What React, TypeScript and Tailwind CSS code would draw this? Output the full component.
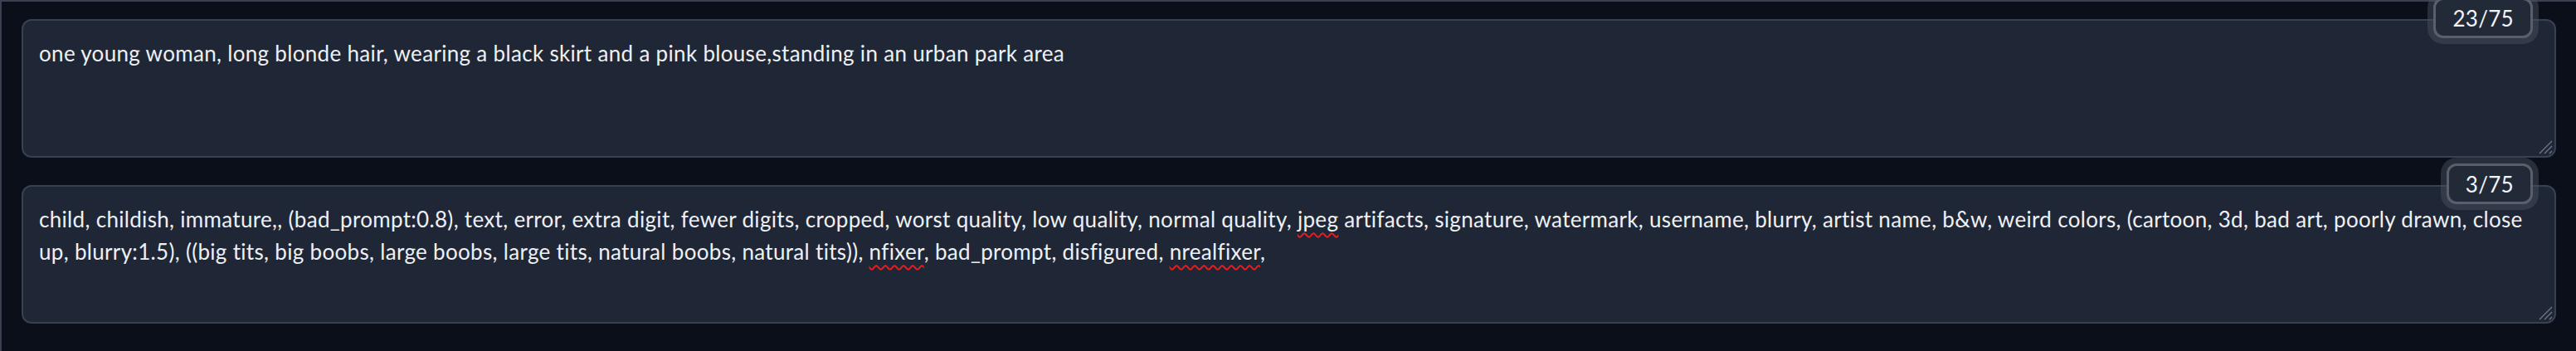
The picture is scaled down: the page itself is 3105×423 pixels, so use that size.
import React from "react";

const font = { fontFamily: "Lato, 'Noto Sans', sans-serif" };

function ResizeGrip() {
  return (
    <svg
      className="absolute right-[2px] bottom-[2px]"
      width="20"
      height="20"
      viewBox="0 0 20 20"
    >
      <line x1="19" y1="4" x2="4" y2="19" stroke="#6b7280" strokeWidth="1.5" />
      <line x1="19" y1="10" x2="10" y2="19" stroke="#6b7280" strokeWidth="1.5" />
      <line x1="19" y1="16" x2="16" y2="19" stroke="#6b7280" strokeWidth="1.5" />
    </svg>
  );
}

function TokenBadge({ count }: { count: string }) {
  return (
    <div className="absolute right-[28px] top-[-26px] z-10 flex h-[49px] items-center rounded-[12px] border-[3px] border-[#59606b] bg-[#222a38] px-[20px] text-[26px] leading-none tracking-[0.3px] text-[#f3f4f6] shadow-[0_0_0_7px_rgba(75,85,99,0.45)]">
      {count}
    </div>
  );
}

function Squiggle({ children }: { children: React.ReactNode }) {
  return (
    <span className="underline decoration-wavy decoration-[#ef1c1c] decoration-[1.5px] underline-offset-[6px]">
      {children}
    </span>
  );
}

function PromptBox({
  count,
  children,
}: {
  count: string;
  children: React.ReactNode;
}) {
  return (
    <div className="relative">
      <TokenBadge count={count} />
      <div className="relative h-[167px] rounded-[12px] border-2 border-[#374151] bg-[#1f2737] px-[19px] py-[20px] text-[26px] leading-[39px] tracking-[0.32px] text-[#eef0f3]">
        {children}
        <ResizeGrip />
      </div>
    </div>
  );
}

export default function App() {
  return (
    <div
      style={font}
      className="min-h-[423px] border-t-2 border-l-2 border-[#374151] bg-[#0b0f19] px-[24px] pt-[21px] pb-[33px]"
    >
      <div className="flex flex-col gap-[33px]">
        <PromptBox count="23/75">
          <div className="whitespace-nowrap">
            one young woman, long blonde hair, wearing a black skirt and a pink blouse,standing in an urban park area
          </div>
        </PromptBox>
        <PromptBox count="3/75">
          <div className="whitespace-nowrap">
            child, childish, immature,, (bad_prompt:0.8), text, error, extra digit, fewer digits, cropped, worst quality, low quality, normal quality, <Squiggle>jpeg</Squiggle> artifacts, signature, watermark, username, blurry, artist name, b&amp;w, weird colors, (cartoon, 3d, bad art, poorly drawn, close
          </div>
          <div className="whitespace-nowrap">
            up, blurry:1.5), ((big tits, big boobs, large boobs, large tits, natural boobs, natural tits)), <Squiggle>nfixer</Squiggle>, bad_prompt, disfigured, <Squiggle>nrealfixer</Squiggle>,
          </div>
        </PromptBox>
      </div>
    </div>
  );
}
